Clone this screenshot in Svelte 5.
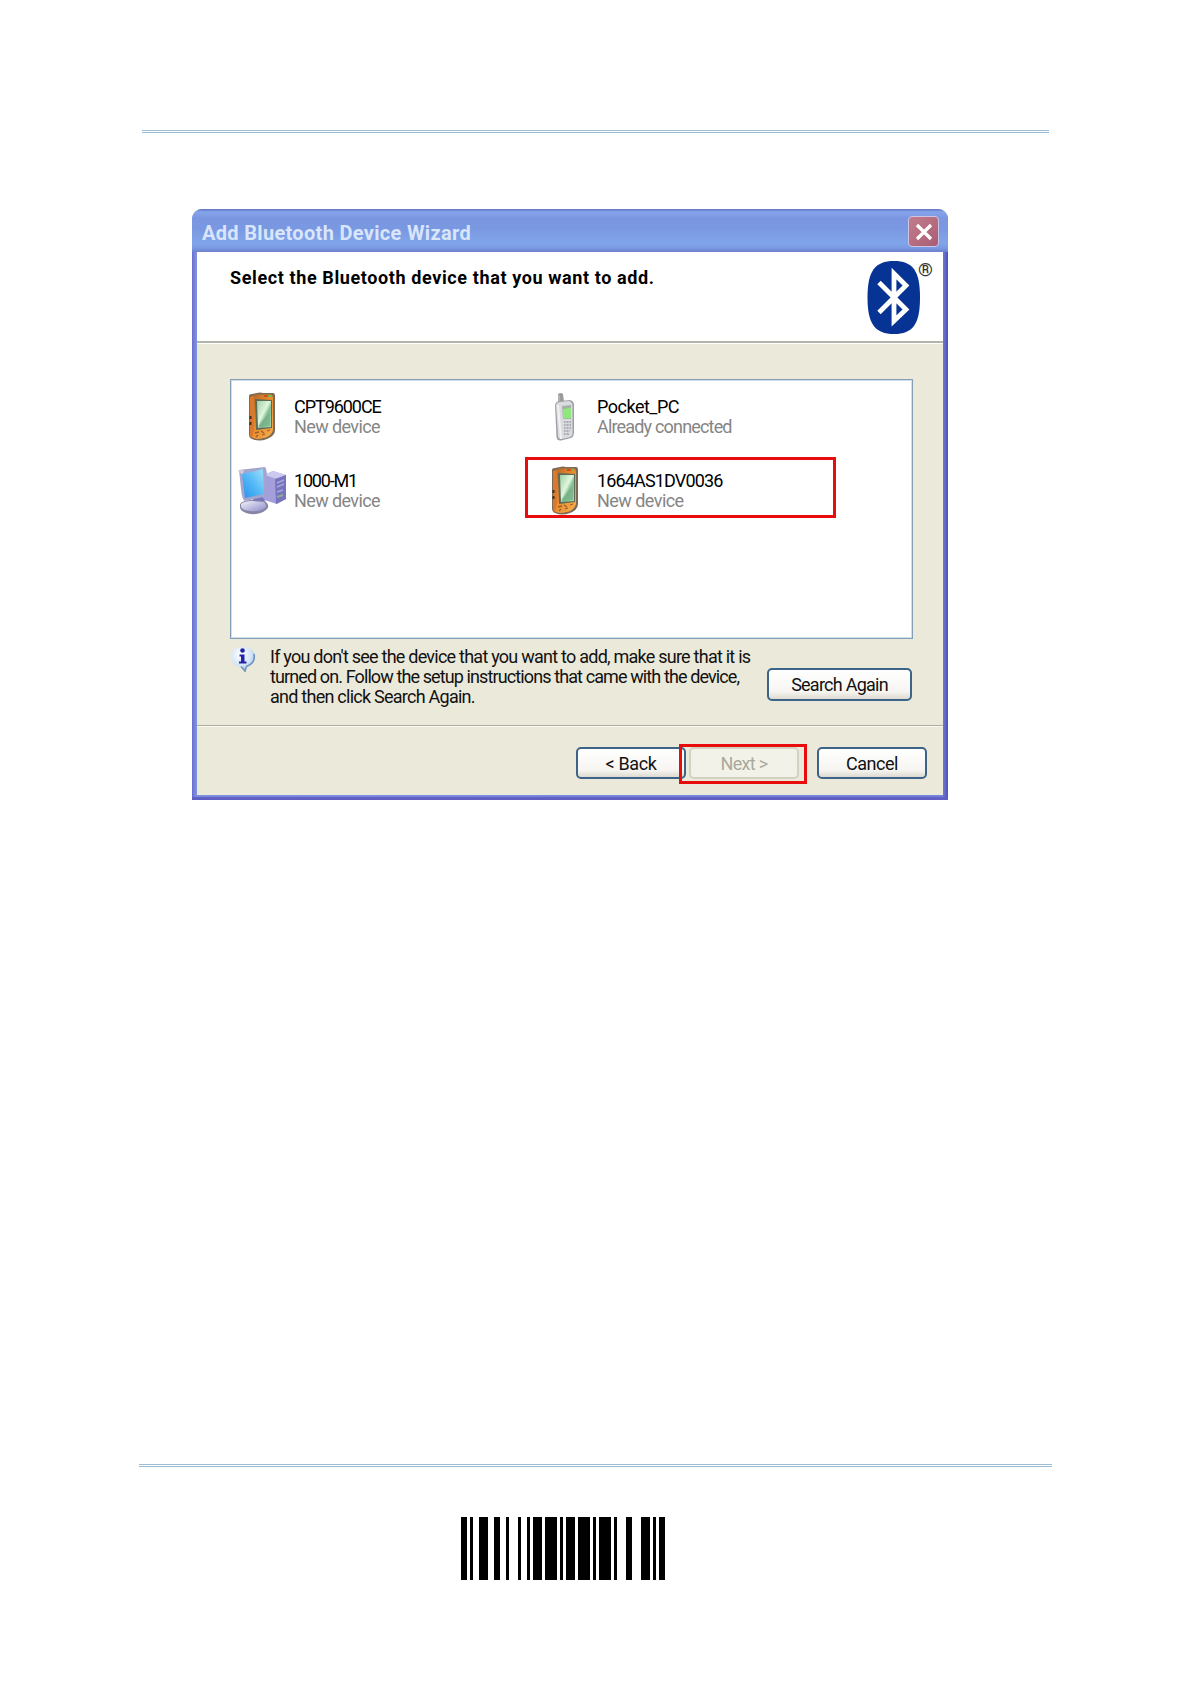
<script>
    let devices = [
        { name: 'CPT9600CE', status: 'New device', icon: 'pda', fit: -1.05, statusFit: -0.6 },
        { name: 'Pocket_PC', status: 'Already connected', icon: 'phone', fit: -0.5, statusFit: -0.82 },
        { name: '1000-M1', status: 'New device', icon: 'pc', fit: -1.2, statusFit: -0.6 },
        { name: '1664AS1DV0036', status: 'New device', icon: 'pda', fit: -0.85, statusFit: -0.54 },
    ];

    // bar, gap, bar, gap... in modules of 3px
    const modules = [2,1,1,2,3,2,2,2,1,3,1,2,1,1,3,1,4,1,1,1,3,1,4,1,1,1,4,1,1,3,2,3,3,1,1,1,2];

    let bars = [];
    let x = 0;
    modules.forEach((m, i) => {
        if (i % 2 === 0) bars.push({ x: x * 3, w: m * 3 });
        x += m;
    });
</script>

{#snippet pda()}
    <svg width="30" height="50" viewBox="0 0 30 50">
        <defs>
            <linearGradient id="pdaBody" x1="0" y1="0" x2="1" y2="1">
                <stop offset="0" stop-color="#a8632b" />
                <stop offset="0.45" stop-color="#ea8a2c" />
                <stop offset="1" stop-color="#f6b04c" />
            </linearGradient>
            <linearGradient id="pdaScreen" x1="0" y1="0" x2="1" y2="1">
                <stop offset="0" stop-color="#9fd0a4" />
                <stop offset="0.45" stop-color="#e0f6df" />
                <stop offset="0.6" stop-color="#85be93" />
                <stop offset="1" stop-color="#a9dcb0" />
            </linearGradient>
        </defs>
        <path d="M2 4 Q2 2 5 2 L10 1 Q13 0 16 1 L26 1 Q28 1 28 4 V38 Q28 44 20 47 Q12 50 5 47 Q2 46 2 42 Z" fill="#7b6a56" />
        <path d="M3 5 L9 2.5 H24 Q26 3 26 6 V38 Q25 43 19 45.500 Q11 48 6 46 Q3 45 3 41 Z" fill="url(#pdaBody)" />
        <path d="M3 5 L7 4 V37 L5 46 Q3 45 3 41 Z" fill="#d9782f" />
        <path d="M8 7 L25 8 V36 L9 38 Z" fill="#5e6a56" />
        <path d="M10 9 L24 9 V35 L11 36 Z" fill="url(#pdaScreen)" />
        <path d="M12 33 L23 20 V34 L12 35 Z" fill="#69a67e" opacity=".55" />
        <path d="M17 4 H24" stroke="#d44e1c" stroke-width="2" />
        <path d="M21 4 H24" stroke="#75b84e" stroke-width="2" />
        <path d="M3.500 24 V27 M3.500 30 V33" stroke="#43301f" stroke-width="2" />
        <path d="M8 41 L12 40 M14 39 L17 41 M20 39 L23 38 M9 45 L11 43 M15 43 L18 42" stroke="#9c6030" stroke-width="1.300" />
    </svg>
{/snippet}

{#snippet phone()}
    <svg width="24" height="50" viewBox="0 0 24 50">
        <path d="M5 2 Q8 0 10 2 L11 10 H5 Z" fill="#999b9d" />
        <path d="M6 3 V9" stroke="#c5c7c9" />
        <path d="M2 13 Q3 9 7 9 L17 8 Q21 9 21 13 V40 Q21 45 18 46 L8 48.500 Q4 49 3.500 45 Z" fill="#9da0a4" />
        <path d="M3 13 Q4 10 7 10 L16 9 Q19.500 10 19.500 14 V40 Q20 44 17 45 L9 47 Q5 47 5 44 Z" fill="#d9dbde" />
        <path d="M5 13 L8 47" stroke="#f1f2f3" stroke-width="2" />
        <path d="M9 14 L18 13 V27 H10 Z" fill="#a4b2a5" />
        <path d="M10 17 L18 16 V26 L10 26.500 Z" fill="#8fe87c" />
        <path d="M11 30 H18 M11 33 H18 M11 36 H18 M11 39 H17 M11 42 H16" stroke="#999da2" stroke-width="1.500" />
        <path d="M13 29 V43 M16 29 V42" stroke="#d9dbde" />
    </svg>
{/snippet}

{#snippet pc()}
    <svg width="50" height="50" viewBox="0 0 50 50">
        <defs>
            <linearGradient id="pcScreen" x1="1" y1="0" x2="0" y2="1">
                <stop offset="0" stop-color="#a3e0fa" />
                <stop offset="0.5" stop-color="#54b9f6" />
                <stop offset="1" stop-color="#2892ea" />
            </linearGradient>
            <linearGradient id="pcBase" x1="0" y1="0" x2="1" y2="1">
                <stop offset="0" stop-color="#f2f2fa" />
                <stop offset="1" stop-color="#8e8bc9" />
            </linearGradient>
        </defs>
        <path d="M27 9 L36 5 L49 9 V33 L40 38 L27 34 Z" fill="#a29fdb" />
        <path d="M27 9 L36 5 L49 9 L40 13 Z" fill="#cbc9ef" />
        <path d="M38 13 L49 9 V33 L39 38 Z" fill="#7873bd" />
        <path d="M40 17 L47 14 M40 21 L47 18 M40 26 L46 24" stroke="#aaa7dc" stroke-width="1.500" />
        <path d="M40 31 L46 29" stroke="#91ac9d" stroke-width="2" />
        <path d="M16 31 L26 30 L29 38 L16 39 Z" fill="#7775be" />
        <path d="M3 38 Q6 34 15 34 L28 35 Q34 40 29 44 Q23 49 13 48 Q3 46 3 41 Z" fill="#8785a4" />
        <path d="M4 38 Q7 35 15 35 L27 36 Q31 40 27 43 Q21 46 13 45 Q4 44 4 40 Z" fill="url(#pcBase)" />
        <path d="M2 4 L28 1 Q31 4 29 14 L27 31 L8 35 Q5 34 4 23 Z" fill="#a3a5cd" />
        <path d="M1 5 L7 3 L6 9 Z" fill="#d4c9d2" />
        <path d="M5 8 L26 3 L27 28 L8 32 Z" fill="url(#pcScreen)" />
    </svg>
{/snippet}

<div class="page">
    <div class="rule top"></div>

    <div class="window">
        <div class="titlebar">
            <span class="title">Add Bluetooth Device Wizard</span>
            <button class="close" aria-label="Close">
                <svg width="18" height="18" viewBox="0 0 18 18">
                    <path d="M2 2 L16 16 M16 2 L2 16" stroke="#fff" stroke-width="3.200" />
                </svg>
            </button>
        </div>

        <div class="client">
            <div class="header">
                <h1>Select the Bluetooth device that you want to add.</h1>
                <div class="logo">
                    <svg width="54" height="73" viewBox="0 0 54 73">
                        <path d="M27 0 C46 0 53 10 53 36.500 C53 63 46 73 27 73 C8 73 0.500 63 0.500 36.500 C0.500 10 8 0 27 0 Z" fill="#073394" />
                        <path d="M12 21.500 L39 48.500 L27 60 V12.500 L39 24.500 L12 51.500" fill="none" stroke="#fff" stroke-width="4.800" />
                    </svg>
                    <span class="reg">®</span>
                </div>
            </div>

            <div class="body">
                <div class="list">
                    {#each devices as device}
                        <div class="device">
                            <div class="icon">
                                {#if device.icon === 'pda'}
                                    {@render pda()}
                                {:else if device.icon === 'phone'}
                                    {@render phone()}
                                {:else}
                                    {@render pc()}
                                {/if}
                            </div>
                            <div class="label">
                                <div class="name" style="letter-spacing: {device.fit}px">{device.name}</div>
                                <div class="status" style="letter-spacing: {device.statusFit}px">{device.status}</div>
                            </div>
                        </div>
                    {/each}
                    <div class="mark device-mark"></div>
                </div>

                <div class="info">
                    <svg width="26" height="27" viewBox="0 0 26 27">
                        <defs>
                            <radialGradient id="bubble" cx=".4" cy=".3" r=".75">
                                <stop offset="0" stop-color="#fff" />
                                <stop offset="0.6" stop-color="#d3e5f8" />
                                <stop offset="1" stop-color="#7ba7dc" />
                            </radialGradient>
                        </defs>
                        <path d="M13 1 C20 1 25 5 25 11 C25 16 21 20 16.500 21 L15.500 26 L10.500 21 C5 20 1 16 1 11 C1 5 6 1 13 1 Z" fill="url(#bubble)" />
                        <path d="M24 8 Q26 17 16.500 20.500 L15 25 L11 20.500" fill="none" stroke="#6e94b9" stroke-width="1.500" />
                        <circle cx="12.500" cy="4.500" r="2.300" fill="#2424a5" />
                        <path d="M9.500 8.500 H14.500 V15.500 H16.500 V17.500 H9 V15.500 H11 V10.500 H9.500 Z" fill="#2424a5" />
                    </svg>
                    <p>
                        <span class="l1">If you don't see the device that you want to add, make sure that it is</span><br />
                        <span class="l2">turned on. Follow the setup instructions that came with the device,</span><br />
                        <span class="l3">and then click Search Again.</span>
                    </p>
                    <button class="btn search">Search Again</button>
                </div>
            </div>

            <div class="footer">
                <button class="btn">&lt; Back</button>
                <button class="btn next" disabled>Next &gt;</button>
                <button class="btn cancel">Cancel</button>
                <div class="mark next-mark"></div>
            </div>
        </div>
    </div>

    <div class="rule bottom"></div>

    <svg class="barcode" width="204" height="63" shape-rendering="crispEdges">
        {#each bars as bar}
            <rect x={bar.x} y="0" width={bar.w} height="63" />
        {/each}
    </svg>
</div>

<style>
    :global(body) {
        margin: 0;
        background: #fff;
    }

    .page {
        width: 1190px;
        height: 1684px;
        display: flex;
        flex-direction: column;
        background: #fff;
        font-family: Roboto, "Liberation Sans", sans-serif;
        font-size: 18px;
        line-height: 20px;
        color: #111;
    }
    .page * {
        box-sizing: border-box;
    }

    .rule {
        height: 3px;
        border-top: 1px solid #9cbcd3;
        border-bottom: 1px solid #9cbcd3;
    }
    .rule.top {
        margin: 130px 141px 0 142px;
    }
    .rule.bottom {
        margin: 664px 138px 0 139px;
    }

    .window {
        width: 756px;
        height: 591px;
        margin: 76px 0 0 192px;
        display: flex;
        flex-direction: column;
        border-radius: 10px 10px 0 0;
        background: linear-gradient(to right, #6a70cf, #7e8fe0 4px, #7583dc 750px, #514fb5);
        box-shadow: inset 0 -3px 1px #5f5fc4;
    }

    .titlebar {
        height: 43px;
        flex: none;
        display: flex;
        justify-content: space-between;
        padding: 7px 9px 0 10px;
        border-radius: 10px 10px 0 0;
        background: linear-gradient(#5f74c4, #86a5ea 3px, #7b96e0 9px, #7a98e2 20px, #80a5e9 34px, #7a9ae2 39px, #6d80cf);
    }
    .title {
        color: #d8e5fb;
        font-size: 20px;
        font-weight: 700;
        line-height: 32px;
        margin-top: 1px;
        letter-spacing: 0.32px;
        white-space: nowrap;
    }
    .close {
        width: 31px;
        height: 31px;
        padding: 0;
        display: flex;
        align-items: center;
        justify-content: center;
        border: 1.500px solid #d0c4e6;
        border-radius: 4px;
        background: linear-gradient(135deg, #c07d8f, #b46a7c 60%, #a65e76);
    }

    .client {
        flex: 1;
        margin: 0 5px 5px 5px;
        display: flex;
        flex-direction: column;
        background: #ebe9d9;
    }

    .header {
        height: 92px;
        display: flex;
        justify-content: space-between;
        padding: 0 10px 0 33px;
        background: #fff;
        border-bottom: 1px solid #fff;
        box-shadow: inset 0 -2px #b5b4a9;
    }
    h1 {
        margin: 16px 0 0;
        font-size: 18px;
        font-weight: 700;
        line-height: 20px;
        letter-spacing: 0.61px;
        color: #000;
        white-space: nowrap;
    }
    .logo {
        display: flex;
        padding-top: 9px;
    }
    .logo svg {
        margin-right: -3px;
    }
    .reg {
        margin-top: -1px;
        font-size: 19px;
        line-height: 20px;
        font-weight: 700;
        color: #333;
    }

    .body {
        height: 381px;
        padding: 35px 30px 0 33px;
    }
    .list {
        position: relative;
        height: 260px;
        display: grid;
        grid-template-columns: 303px 303px;
        grid-auto-rows: 74px;
        padding: 10px 0 0 6px;
        background: #fff;
        border: 1px solid #839fb8;
        box-shadow: inset 1px 1px #d4dee7, inset -1px -1px #d4dee7;
    }
    .device {
        display: flex;
        gap: 7px;
    }
    .icon {
        width: 50px;
        height: 54px;
        display: flex;
        align-items: center;
        justify-content: center;
    }
    .label {
        padding-top: 7px;
        white-space: nowrap;
    }
    .name {
        color: #000;
    }
    .status {
        color: #858585;
    }

    .mark {
        position: absolute;
        border: 3px solid #e80c0c;
    }
    .device-mark {
        left: 294px;
        top: 77px;
        width: 311px;
        height: 61px;
    }
    .next-mark {
        left: 482px;
        top: 18px;
        width: 128px;
        height: 40px;
    }

    .info {
        display: flex;
        justify-content: space-between;
        padding: 7px 1px 0 0;
    }
    .info svg {
        flex: none;
    }
    .info p {
        width: 482px;
        margin: 1px auto 0 14px;
        white-space: nowrap;
    }
    .l1 {
        letter-spacing: -0.76px;
    }
    .l2 {
        letter-spacing: -0.89px;
    }
    .l3 {
        letter-spacing: -0.75px;
    }

    .btn {
        width: 110px;
        height: 32px;
        padding: 2px 0 0;
        font: inherit;
        letter-spacing: -0.4px;
        color: #111;
        white-space: nowrap;
        border: 2px solid #3d6488;
        border-radius: 5px;
        background: linear-gradient(#fff, #f6f5f1 75%, #dddad0);
    }
    .btn.search {
        width: 145px;
        height: 33px;
        margin-top: 22px;
        padding-top: 1px;
        letter-spacing: -0.75px;
    }
    .btn.next {
        margin-left: 3px;
        letter-spacing: -0.7px;
        color: #aaa99b;
        background: #f3f2e8;
        border-color: #d3d1c2;
    }
    .btn.cancel {
        margin-left: 18px;
        letter-spacing: -0.5px;
    }

    .footer {
        position: relative;
        flex: 1;
        display: flex;
        padding: 21px 0 0 379px;
        border-top: 1px solid #aeada0;
        box-shadow: inset 0 1px #faf9f2;
    }

    .barcode {
        display: block;
        margin: 50px 0 0 461px;
    }
</style>
